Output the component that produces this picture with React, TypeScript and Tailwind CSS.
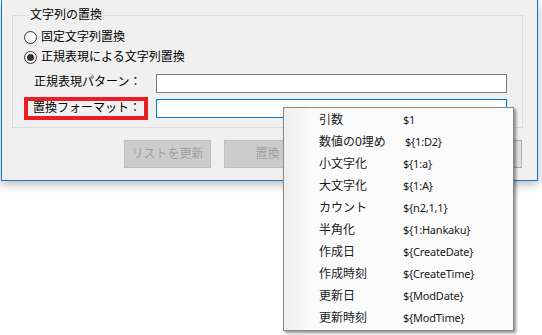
import React from "react";

const items: [string, string, boolean?][] = [
  ["引数", "$1"],
  ["数値の0埋め", "${1:D2}", true],
  ["小文字化", "${1:a}"],
  ["大文字化", "${1:A}"],
  ["カウント", "${n2,1,1}"],
  ["半角化", "${1:Hankaku}"],
  ["作成日", "${CreateDate}"],
  ["作成時刻", "${CreateTime}"],
  ["更新日", "${ModDate}"],
  ["更新時刻", "${ModTime}"],
];

function Radio({ checked }: { checked?: boolean }) {
  return (
    <span className="flex h-[13px] w-[13px] items-center justify-center rounded-full border border-[#333333] bg-white">
      {checked && <span className="h-[7px] w-[7px] rounded-full bg-[#333333]" />}
    </span>
  );
}

export default function App() {
  return (
    <div
      className="relative h-[335px] w-[542px] overflow-hidden bg-white text-[12px] text-black"
      style={{ fontFamily: '"Noto Sans", "Noto Sans CJK JP", sans-serif' }}
    >
      <div className="ml-[1px] flex h-[181px] w-[537px] flex-col border-x border-b border-[#1a73c4] bg-[#f0f0f0] pl-[10px] pr-[14px] pt-[7px] shadow-[0_3px_10px_rgba(0,0,0,0.3)]">
        <fieldset className="border border-[#dcdcdc] pb-[7px] pl-[11px]">
          <legend className="ml-[5px] px-[1px] leading-[16px]">文字列の置換</legend>
          <div className="flex flex-col pt-[4px]">
            <div className="flex h-[20px] items-center gap-[4px]">
              <Radio />
              <span className="leading-[16px]">固定文字列置換</span>
            </div>
            <div className="flex h-[20px] items-center gap-[4px]">
              <Radio checked />
              <span className="leading-[16px]">正規表現による文字列置換</span>
            </div>
            <div className="mt-[5px] flex flex-col gap-[2px]">
              <div className="flex h-[23px] items-center gap-[8px]">
                <div className="flex h-[23px] w-[124px] items-center border-[4px] border-transparent pb-[3px] pl-[6px] leading-[16px]">
                  正規表現パターン：
                </div>
                <div className="h-[19px] w-[351px] border border-[#7a7a7a] bg-white" />
              </div>
              <div className="flex h-[23px] items-center gap-[8px]">
                <div className="flex h-[23px] w-[124px] items-center border-[4px] border-[#ec1c24] pb-[1px] pl-[5px] leading-[16px]">
                  置換フォーマット：
                </div>
                <div className="h-[19px] w-[351px] border border-[#0078d7] bg-white" />
              </div>
            </div>
          </div>
        </fieldset>
        <div className="ml-[112px] mr-[1px] mt-[12px] flex gap-[13px]">
          <div className="flex h-[28px] w-[87px] items-center justify-center border border-[#bfbfbf] bg-[#cccccc] text-[#a0a0a0]">
            リストを更新
          </div>
          <div className="flex h-[28px] w-[87px] items-center justify-center border border-[#bfbfbf] bg-[#cccccc] text-[#a0a0a0]">
            置換
          </div>
          <div className="ml-auto flex h-[28px] w-[87px] items-center justify-center border border-[#adadad] bg-[#e1e1e1]">
            閉じる
          </div>
        </div>
      </div>

      <div className="absolute left-[283px] top-[107px] flex h-[224px] w-[231px] border border-[#8a8a8a] bg-[#fbfbfb] shadow-[2px_2px_3px_rgba(0,0,0,0.45)]">
        <div className="w-[24px] bg-gradient-to-r from-[#eeeeee] to-[#f8f8f8]" />
        <div className="flex flex-1 flex-col pt-[1px]">
          {items.map(([label, value, shift]) => (
            <div key={label} className="flex h-[22px] items-center pl-[11px] text-[#1a1a1a]">
              <span className="w-[84px] leading-[16px]">{label}</span>
              <span
                className={
                  shift
                    ? "pl-[2px] text-[11px] tracking-[-0.2px] leading-[16px]"
                    : "text-[11px] tracking-[-0.2px] leading-[16px]"
                }
              >
                {value}
              </span>
            </div>
          ))}
        </div>
      </div>
    </div>
  );
}
